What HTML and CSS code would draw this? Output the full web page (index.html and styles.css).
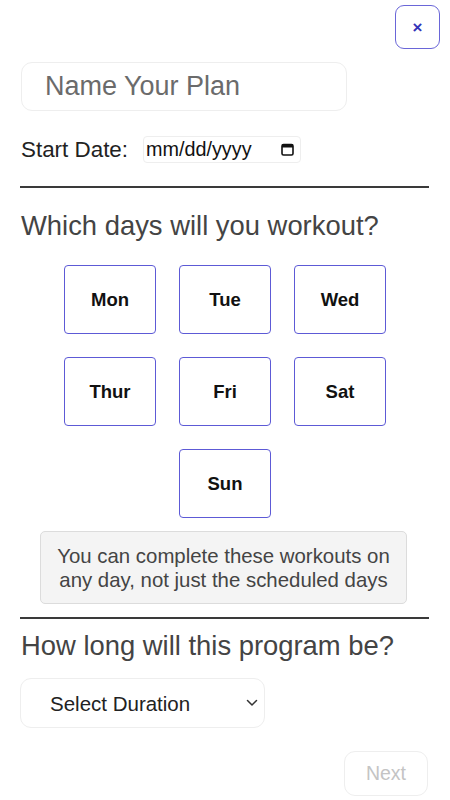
FILE: index.html
```html
<!DOCTYPE html>
<html>
<head>
<meta charset="utf-8">
<link rel="stylesheet" href="styles.css">
</head>
<body>
<div class="page">
  <div class="topbar">
    <button class="close-btn">×</button>
  </div>
  <input class="name-input" type="text" placeholder="Name Your Plan">
  <div class="date-row">
    <span class="date-label">Start Date:</span>
    <div class="date-box">
      <span class="date-text">mm/dd/yyyy</span>
      <svg class="cal-icon" width="15" height="15" viewBox="0 0 15 15"><rect x="2" y="2.5" width="11" height="10.5" rx="1.5" fill="none" stroke="#111" stroke-width="1.6"/><rect x="2" y="2.5" width="11" height="3" fill="#111"/></svg>
    </div>
  </div>
  <hr class="divider">
  <h2 class="heading">Which days will you workout?</h2>
  <div class="days">
    <button class="day">Mon</button>
    <button class="day">Tue</button>
    <button class="day">Wed</button>
    <button class="day">Thur</button>
    <button class="day">Fri</button>
    <button class="day">Sat</button>
    <button class="day">Sun</button>
  </div>
  <div class="info">You can complete these workouts on any day, not just the scheduled days</div>
  <hr class="divider divider2">
  <h2 class="heading heading2">How long will this program be?</h2>
  <div class="select-wrap">
    <select class="duration">
      <option>Select Duration</option>
    </select>
    <svg class="chevron" width="12" height="8" viewBox="0 0 12 8"><path d="M1.5 1.5 L6 6 L10.5 1.5" fill="none" stroke="#333" stroke-width="1.5" stroke-linecap="round" stroke-linejoin="round"/></svg>
  </div>
  <div class="footer">
    <button class="next-btn">Next</button>
  </div>
</div>
</body>
</html>
```

FILE: styles.css
```css
* { box-sizing: border-box; }
html, body { margin: 0; padding: 0; background: #fff; }
body { font-family: "Liberation Sans", Arial, sans-serif; color: #222; }
.page { width: 450px; padding: 0 20px 0 20px; }
.topbar { display: flex; justify-content: flex-end; padding-top: 5px; margin-right: -10px; }
.close-btn {
  width: 45px; height: 44px; border: 1.5px solid #6a66d8; border-radius: 9px;
  background: #fff; color: #3232b8; font-family: "Liberation Sans", Arial, sans-serif;
  font-size: 17px; font-weight: bold; padding: 0; line-height: 1;
}
.name-input {
  display: block; margin: 13px 0 0 1px; width: 326px; height: 49px;
  border: 1.5px solid #eeeeee; border-radius: 11px; padding: 0 0 0 23px;
  font-family: "Liberation Sans", Arial, sans-serif; font-size: 27px; color: #333;
  outline: none;
}
.name-input::placeholder { color: #6b6b6b; }
.date-row { display: flex; align-items: center; margin-top: 25px; height: 27px; }
.date-label { font-size: 22.4px; color: #222; margin-right: 15px; padding-left: 1px; }
.date-box {
  display: flex; align-items: center; justify-content: space-between;
  width: 158px; height: 27px; border: 1.5px solid #eeeeee; border-radius: 4px;
  padding: 0 5px 0 2px; background: #fff;
}
.date-text { font-size: 19.8px; color: #111; line-height: 1; }
.cal-icon { display: block; }
.divider { border: none; border-top: 2px solid #3a3a3a; margin: 23px 1px 0 0; height: 0; }
.heading {
  margin: 22px 0 0 1px; font-size: 27.4px; font-weight: normal; color: #444; line-height: 32px;
}
.days {
  display: flex; flex-wrap: wrap; justify-content: center; gap: 23px 23px;
  width: 322px; margin: 23px auto 0 auto;
}
.day {
  width: 92px; height: 69px; border: 1.5px solid #5d5ad6; border-radius: 4px;
  background: #fff; font-family: "Liberation Sans", Arial, sans-serif;
  font-size: 18.5px; font-weight: bold; color: #111; padding: 0;
}
.info {
  width: 367px; margin: 13px 0 0 20px; padding: 11.5px 10px; background: #f4f4f4;
  border: 1.5px solid #dcdcdc; border-radius: 5px; text-align: center;
  font-size: 20.4px; line-height: 24px; color: #444;
}
.divider2 { margin-top: 13px; }
.heading2 { margin-top: 11px; }
.select-wrap { position: relative; width: 245px; margin-top: 16px; }
.duration {
  appearance: none; -webkit-appearance: none; display: block; width: 245px; height: 50px;
  border: 1.5px solid #eeeeee; border-radius: 11px; background: #fff;
  padding: 0 0 0 29px; font-family: "Liberation Sans", Arial, sans-serif; font-size: 20.5px; color: #222;
}
.chevron { position: absolute; right: 7px; top: 21px; }
.footer { display: flex; justify-content: flex-end; margin-top: 23px; margin-right: 2px; }
.next-btn {
  width: 84px; height: 45px; border: 1.5px solid #eeeeee; border-radius: 11px; background: #fff;
  font-family: "Liberation Sans", Arial, sans-serif; font-size: 19.5px; color: #c4c4c4; padding: 0;
}
```
